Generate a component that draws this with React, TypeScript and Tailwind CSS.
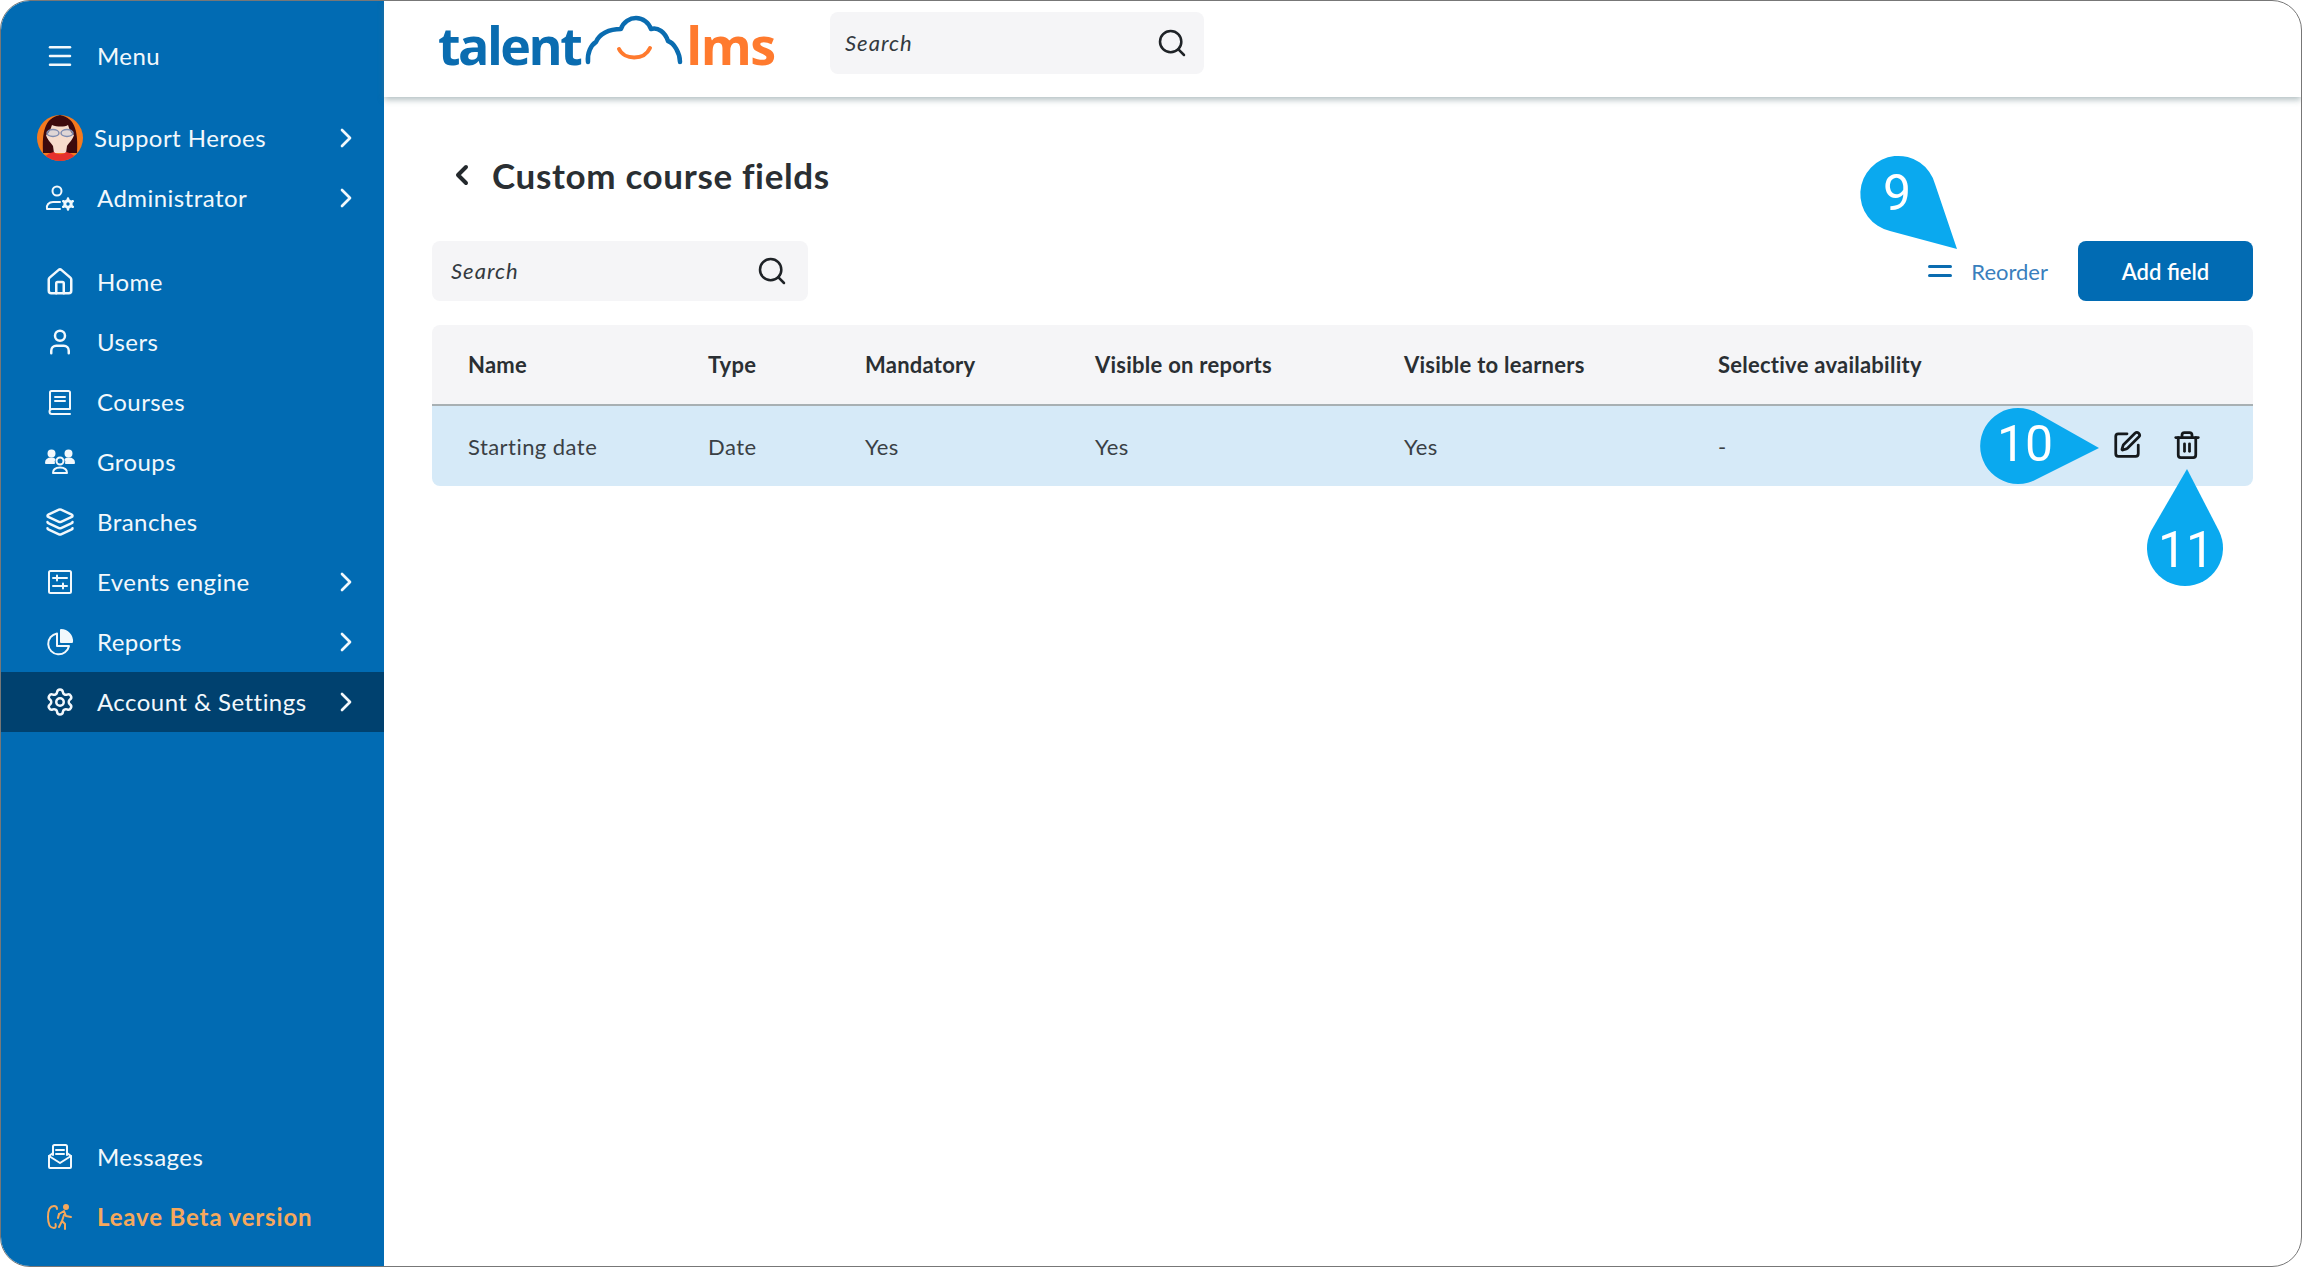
import React from "react";
import { ChevronRight, ChevronLeft, Menu, Search, House, User, Layers, SquarePen, Trash2, Settings, Equal } from "lucide-react";

const font = "font-['Lato','Open_Sans',sans-serif]";

function Ic({ children }: { children: React.ReactNode }) {
  return (
    <svg width="30" height="30" viewBox="0 0 30 30" fill="none" stroke="currentColor" strokeWidth="2" strokeLinecap="round" strokeLinejoin="round">
      {children}
    </svg>
  );
}

const AdminIcon = () => (
  <Ic>
    <circle cx="12" cy="8" r="4.5" />
    <path d="M2 26c-1-4 2-7 6-7h7M2 26h13" />
    <circle cx="23" cy="21" r="3.2" strokeWidth="3" />
    <path d="M23 15.500v2M23 24.500v2M18.200 18.200l1.700 1M26.100 22.800l1.700 1M18.200 23.800l1.700-1M26.100 19.200l1.700-1" strokeWidth="2.500" />
  </Ic>
);
const BookIcon = () => (
  <Ic>
    <path d="M5 23V5.500A1.500 1.500 0 0 1 6.500 4h17A1.500 1.500 0 0 1 25 5.500V22H7a2.500 2.500 0 0 0 0 5h18" />
    <path d="M10 10h10M10 14h10" />
  </Ic>
);
const GroupsIcon = () => (
  <Ic>
    <circle cx="15" cy="14" r="3.500" />
    <path d="M8 26c0-4 3-5.500 7-5.500s7 1.500 7 5.500z" />
    <circle cx="6.500" cy="6.500" r="3" fill="currentColor" />
    <circle cx="23.500" cy="6.500" r="3" fill="currentColor" />
    <path d="M1 16c0-3 2-4.500 5.500-4.500 1.500 0 2.500.5 3 1-1 1-1 2.500-.5 3.500z" fill="currentColor" />
    <path d="M29 16c0-3-2-4.500-5.500-4.500-1.500 0-2.500.5-3 1 1 1 1 2.500.5 3.500z" fill="currentColor" />
  </Ic>
);
const EventsIcon = () => (
  <Ic>
    <rect x="4" y="4" width="22" height="22" rx="1.500" />
    <path d="M8 11h14M8 19h14" />
    <path d="M12 8.500v5M18 16.500v5" />
  </Ic>
);
const ReportsIcon = () => (
  <Ic>
    <path d="M12 6.500a10.500 10.500 0 1 0 12 12.500H12z" />
    <path d="M16 3a11 11 0 0 1 11 12H16z" fill="currentColor" />
  </Ic>
);
const MessagesIcon = () => (
  <Ic>
    <path d="M8 13V4.500A1.500 1.500 0 0 1 9.500 3h11A1.500 1.500 0 0 1 22 4.500V13" />
    <path d="M11 8h8M11 12h8" />
    <path d="M8 11l-4 3v11a1 1 0 0 0 1 1h20a1 1 0 0 0 1-1V14l-4-3" />
    <path d="M4 14l11 7 11-7" />
  </Ic>
);
const LeaveIcon = () => (
  <svg width="30" height="30" viewBox="0 0 30 30" fill="none" stroke="currentColor" strokeWidth="2" strokeLinecap="round" strokeLinejoin="round">
    <path d="M9 4C5 4 3 8 3 15s2 11 6 11c2 0 2-2 1.500-4M9 4c2 0 3 1 3 3" />
    <circle cx="21" cy="5" r="2" fill="currentColor" />
    <path d="M14 12l5-3 2 5 5 1M19 13l-2 6 3 3v5M17 19l-3 6" />
    <path d="M14 12l-1 4" />
  </svg>
);

const Avatar = () => (
  <svg width="46" height="46" viewBox="0 0 46 46" className="shrink-0">
    <defs>
      <clipPath id="av">
        <circle cx="23" cy="23" r="23" />
      </clipPath>
    </defs>
    <g clipPath="url(#av)">
      <rect width="46" height="46" fill="#f47a1f" />
      <path d="M6 38C5 18 7 3 23 0c16 3 18 18 17 38z" fill="#3d0a0d" />
      <path d="M9 20C13 18 14 12 15 10C20 12 28 12 31 10C32 12 33 18 37 20C36 24 32 28 30 31L29 38H17L16 31C14 28 10 24 9 20z" fill="#f6dccc" />
      <path d="M6 46C8 40 12 38 17 37C20 40 26 40 29 37C34 38 38 40 40 46z" fill="#e5322d" />
      <g fill="#c8d0e0" fillOpacity="0.5" stroke="#7f8cb0" strokeWidth="1.500">
        <ellipse cx="16" cy="18" rx="6" ry="3.500" />
        <ellipse cx="30" cy="18" rx="6" ry="3.500" />
      </g>
    </g>
  </svg>
);

function NavRow({ icon, label, chevron, active, wide }: { icon: React.ReactNode; label: string; chevron?: boolean; active?: boolean; wide?: boolean }) {
  return (
    <div className={`flex items-center h-[60px] pl-[44px] pr-[22px] ${active ? "bg-[#00416f]" : ""}`}>
      <span className="w-[30px] h-[30px] flex items-center justify-center shrink-0">{icon}</span>
      <span className={`ml-[22px] text-[24px] flex-1 ${wide ? "tracking-[0.85px]" : "tracking-[0.45px]"}`}>{label}</span>
      {chevron && <ChevronRight size={32} strokeWidth={2} />}
    </div>
  );
}

function SearchBox({ width, textClass }: { width: string; textClass: string }) {
  return (
    <div className={`flex items-center justify-between rounded-lg bg-[#f5f5f7] ${width} ${textClass}`}>
      <span className="italic text-[22px] tracking-[1px] text-[#333a40] -mt-[1px]">Search</span>
      <Search size={32} strokeWidth={1.900} className="text-[#1f2327]" />
    </div>
  );
}

const headers = ["Name", "Type", "Mandatory", "Visible on reports", "Visible to learners", "Selective availability"];
const values = ["Starting date", "Date", "Yes", "Yes", "Yes", "-"];
const colW = ["w-[240px]", "w-[157px]", "w-[230px]", "w-[309px]", "w-[314px]", "w-[300px]"];

function Callout({ d, label, textClass }: { d: string; label: string; textClass: string }) {
  return (
    <>
      <svg className="absolute left-0 top-0 pointer-events-none" width="2302" height="1267">
        <path d={d} fill="#0aa9ef" />
      </svg>
      <span className={`absolute font-['Roboto',sans-serif] font-normal text-white text-[50px] leading-none ${textClass}`}>{label}</span>
    </>
  );
}

export default function App() {
  return (
    <div className={`relative w-[2302px] h-[1267px] bg-white ${font}`}>
      <div className="flex w-full h-full rounded-[30px] border border-[#777777] overflow-hidden">
        <aside className="w-[383px] shrink-0 bg-[#016bb3] text-[#f2f8fc] flex flex-col pt-[25px] pb-[19px]">
          <NavRow icon={<Menu size={34} strokeWidth={2} />} label="Menu" />
          <div className="flex items-center h-[60px] mt-[22px] pl-[36px] pr-[22px]">
            <Avatar />
            <span className="ml-[11px] text-[24px] tracking-[0.45px] flex-1">Support Heroes</span>
            <ChevronRight size={32} strokeWidth={2} />
          </div>
          <NavRow icon={<AdminIcon />} label="Administrator" chevron />
          <div className="h-[24px]" />
          <NavRow icon={<House size={30} strokeWidth={2} />} label="Home" />
          <NavRow icon={<User size={30} strokeWidth={2} />} label="Users" />
          <NavRow icon={<BookIcon />} label="Courses" />
          <NavRow icon={<GroupsIcon />} label="Groups" />
          <NavRow icon={<Layers size={30} strokeWidth={2} />} label="Branches" />
          <NavRow icon={<EventsIcon />} label="Events engine" chevron />
          <NavRow icon={<ReportsIcon />} label="Reports" chevron />
          <NavRow icon={<Settings size={30} strokeWidth={2} />} label="Account & Settings" chevron active />
          <div className="flex-1" />
          <NavRow icon={<MessagesIcon />} label="Messages" />
          <div className="text-[#f6a85c] font-bold">
            <NavRow icon={<LeaveIcon />} label="Leave Beta version" wide />
          </div>
        </aside>
        <main className="flex-1 flex flex-col min-w-0">
          <header className="h-[96px] shrink-0 flex items-start pl-[54px] shadow-[0_3px_6px_rgba(90,120,125,0.45)]">
            <div className="flex items-center h-[87px] w-[392px] shrink-0">
              <span className="font-['Open_Sans',sans-serif] font-bold text-[52px] tracking-[-2.500px] leading-none text-[#0a6cb0]">talent</span>
              <svg width="100" height="50" viewBox="0 0 100 50" fill="none" className="ml-[4px] mr-[2px] -mt-[10px] shrink-0">
                <path d="M4 47C3 38 7 30 12 27C15 19 25 14 37 14C39 7 46 3 52 3C59 3 65 8 67 14C74 12 81 17 84 26C90 28 96 38 96 47" stroke="#0a6cb0" strokeWidth="4.500" strokeLinecap="round" strokeLinejoin="round" />
                <path d="M35 34C40 45 60 46 66 33" stroke="#ff7a2e" strokeWidth="4" strokeLinecap="round" />
              </svg>
              <span className="font-['Open_Sans',sans-serif] font-bold text-[52px] tracking-[-1.500px] leading-none text-[#ff7a2e]">lms</span>
            </div>
            <SearchBox width="w-[374px] h-[62px] mt-[11px]" textClass="pl-[15px] pr-[16px]" />
          </header>
          <div className="flex-1 pl-[48px] pr-[48px]">
            <div className="flex items-center h-[40px] mt-[58px]">
              <ChevronLeft size={32} strokeWidth={3} className="text-[#24292d] ml-[14px]" />
              <h1 className="ml-[14px] text-[35px] tracking-[0.65px] font-bold text-[#2a2f33]">Custom course fields</h1>
            </div>
            <div className="flex items-center justify-between mt-[46px]">
              <SearchBox width="w-[376px] h-[60px]" textClass="pl-[19px] pr-[20px]" />
              <div className="flex items-center">
                <Equal size={36} strokeWidth={2} className="text-[#0a6cb0]" />
                <span className="ml-[13px] text-[22px] text-[#3a7fbd]">Reorder</span>
                <button className="ml-[30px] w-[175px] h-[60px] rounded-lg bg-[#016bb3] text-white text-[22px] font-semibold">Add field</button>
              </div>
            </div>
            <div className="mt-[24px]">
              <div className="flex items-center h-[81px] pl-[36px] bg-[#f5f5f7] rounded-t-lg border-b-2 border-[#a8b0b3] text-[22px] tracking-[0.25px] font-bold text-[#2a2f33]">
                {headers.map((h, i) => (
                  <div key={h} className={colW[i]}>{h}</div>
                ))}
              </div>
              <div className="relative flex items-center h-[80px] pl-[36px] bg-[#d6eaf8] rounded-b-lg text-[22px] tracking-[0.45px] text-[#3a4045]">
                {values.map((v, i) => (
                  <div key={i} className={colW[i]}>{v}</div>
                ))}
                <div className="ml-auto -mt-[3px] flex items-center gap-[30px] pr-[51px] text-[#15191c]">
                  <SquarePen size={30} strokeWidth={2.200} />
                  <Trash2 size={30} strokeWidth={2.200} />
                </div>
              </div>
            </div>
          </div>
        </main>
      </div>
      <Callout d="M1957 249L1890 231A38 38 0 1 1 1935 184Z" label="9" textClass="left-[1883px] top-[168px]" />
      <Callout d="M2099 448L2037 479A38 38 0 1 1 2037 413Z" label="10" textClass="left-[1997px] top-[419px]" />
      <Callout d="M2187 469L2219 531A38 38 0 1 1 2151 531Z" label="11" textClass="left-[2158px] top-[525px]" />
    </div>
  );
}
